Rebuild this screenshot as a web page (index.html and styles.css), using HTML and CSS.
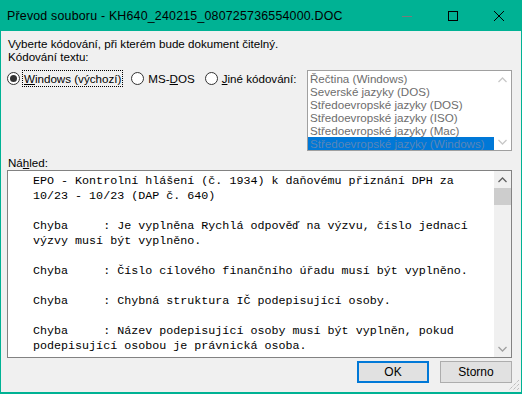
FILE: index.html
```html
<!DOCTYPE html>
<html lang="cs">
<head>
  <meta charset="UTF-8">
  <title>Převod souboru</title>
  <link rel="stylesheet" href="styles.css">
</head>
<body>
  <div class="window">
    <div class="titlebar">
      <span class="title">Převod souboru - KH640_240215_080725736554000.DOC</span>
      <div class="caption-btns">
        <span class="cbtn min"><svg width="10" height="10" viewBox="0 0 10 10"><path d="M0 5.5h10" stroke="#7a7a7a" stroke-width="1"/></svg></span>
        <span class="cbtn"><svg width="10" height="10" viewBox="0 0 10 10"><rect x="0.5" y="0.5" width="9" height="9" fill="none" stroke="#000" stroke-width="1"/></svg></span>
        <span class="cbtn"><svg width="10" height="10" viewBox="0 0 10 10"><path d="M0 0L10 10M10 0L0 10" stroke="#000" stroke-width="1"/></svg></span>
      </div>
    </div>

    <div class="content">
      <div class="line">Vyberte kódování, při kterém bude dokument čitelný.</div>
      <div class="line">Kódování textu:</div>

      <div class="enc-row">
        <div class="radios">
          <label class="radio checked"><span class="dot"></span><span class="focus"><u>W</u>indows (výchozí)</span></label>
          <label class="radio"><span class="dot"></span><span>MS-<u>D</u>OS</span></label>
          <label class="radio"><span class="dot"></span><span><u>J</u>iné kódování:</span></label>
        </div>
        <div class="listbox">
          <div class="items">
            <div class="item">Řečtina (Windows)</div>
            <div class="item">Severské jazyky (DOS)</div>
            <div class="item">Středoevropské jazyky (DOS)</div>
            <div class="item">Středoevropské jazyky (ISO)</div>
            <div class="item">Středoevropské jazyky (Mac)</div>
            <div class="item selected">Středoevropské jazyky (Windows)</div>
          </div>
          <div class="vscroll disabled">
            <span class="arrow"><svg width="9" height="6" viewBox="0 0 9 6"><path d="M0.5 5L4.5 1L8.5 5" fill="none" stroke="currentColor" stroke-width="1.3"/></svg></span>
            <span class="track"></span>
            <span class="arrow"><svg width="9" height="6" viewBox="0 0 9 6"><path d="M0.5 1L4.5 5L8.5 1" fill="none" stroke="currentColor" stroke-width="1.3"/></svg></span>
          </div>
        </div>
      </div>

      <div class="preview-label">Ná<u>h</u>led:</div>
      <div class="preview">
<pre class="text">EPO - Kontrolní hlášení (č. 1934) k daňovému přiznání DPH za
10/23 - 10/23 (DAP č. 640)

Chyba     : Je vyplněna Rychlá odpověď na výzvu, číslo jednací
výzvy musí být vyplněno.

Chyba     : Číslo cílového finančního úřadu musí být vyplněno.

Chyba     : Chybná struktura IČ podepisující osoby.

Chyba     : Název podepisující osoby musí být vyplněn, pokud
podepisující osobou je právnická osoba.</pre>
        <div class="vscroll">
          <span class="arrow up"><svg width="9" height="6" viewBox="0 0 9 6"><path d="M0.5 5L4.5 1L8.5 5" fill="none" stroke="currentColor" stroke-width="1.3"/></svg></span>
          <span class="track"><span class="thumb"></span></span>
          <span class="arrow"><svg width="9" height="6" viewBox="0 0 9 6"><path d="M0.5 1L4.5 5L8.5 1" fill="none" stroke="currentColor" stroke-width="1.3"/></svg></span>
        </div>
      </div>

      <div class="buttons">
        <button class="btn default">OK</button>
        <button class="btn">Storno</button>
      </div>
    </div>
    <svg class="grip" width="12" height="12" viewBox="0 0 12 12">
      <path d="M11 1L1 11M11 5L5 11M11 9L9 11" stroke="#a8a8a8" stroke-width="1" stroke-dasharray="1 1"/>
    </svg>
  </div>
</body>
</html>
```

FILE: styles.css
```css
body { margin: 0; font-family: "Liberation Sans", Arial, sans-serif; font-size: 11.6px; color: #000; }
.window { position: relative; width: 522px; height: 394px; box-sizing: border-box; border: 1px solid #00b294; border-top: 0; border-bottom-width: 2px; background: #f0f0f0; display: flex; flex-direction: column; overflow: hidden; }
.titlebar { height: 31px; flex: none; background: #00b294; display: flex; align-items: center; padding-left: 7px; margin: 0 -1px; }
.title { flex: 1; font-size: 12.4px; letter-spacing: 0.2px; white-space: nowrap; }
.caption-btns { display: flex; height: 100%; }
.cbtn { width: 46px; display: flex; align-items: center; justify-content: center; }

.content { padding: 6px 9px 0 6px; display: flex; flex-direction: column; }
.line { line-height: 13px; padding-left: 1px; }

.enc-row { display: flex; justify-content: space-between; margin-top: 7px; }
.radios { display: flex; height: 16px; align-items: center; white-space: nowrap; }
.radio { display: flex; align-items: center; flex: none; }
.radio + .radio { margin-left: 10px; }
.radio .dot { width: 11px; height: 11px; border: 1px solid #333; border-radius: 50%; background: #fff; margin-right: 4px; box-sizing: content-box; display: flex; align-items: center; justify-content: center; }
.radio.checked .dot::after { content: ""; width: 7px; height: 7px; border-radius: 50%; background: #333; }
.radio .focus { outline: 1px dotted #000; outline-offset: 1px; }

.listbox { width: 203px; height: 79px; flex: none; border: 1px solid #a0a0a0; background: #fff; display: flex; }
.items { flex: 1; padding: 1px 0 0 0; color: #6d6d6d; overflow: hidden; }
.item { height: 13px; line-height: 13px; padding-left: 2px; white-space: nowrap; }
.item.selected { background: #0078d7; color: #5a86b8; }

.vscroll { width: 17px; flex: none; display: flex; flex-direction: column; background: #f0f0f0; color: #606060; }
.vscroll.disabled { background: #fff; color: #c8c8c8; }
.vscroll .arrow { height: 17px; display: flex; align-items: center; justify-content: center; }
.vscroll .track { flex: 1; }
.vscroll .thumb { display: block; height: 17px; background: #cdcdcd; }
.vscroll .arrow.up { color: #606060; }
.vscroll .arrow:last-child { color: #a0a0a0; }
.vscroll.disabled .arrow { color: #c8c8c8; }

.preview-label { margin-top: 4px; line-height: 15px; padding-left: 1px; }
.preview { height: 186px; border: 1px solid #828282; background: #fff; display: flex; }
.text { flex: 1; margin: 0; padding: 3px 0 0 25px; font-family: "Liberation Mono", "Courier New", monospace; font-size: 11.7px; line-height: 15px; overflow: hidden; white-space: pre; }

.buttons { display: flex; justify-content: flex-end; gap: 11px; margin-top: 3px; }
.btn { width: 72px; height: 22px; font-family: inherit; font-size: 12px; background: #e1e1e1; border: 1px solid #adadad; padding: 0; color: #000; }
.btn.default { border: 2px solid #0078d7; }

.grip { position: absolute; right: 1px; bottom: 1px; }
```
